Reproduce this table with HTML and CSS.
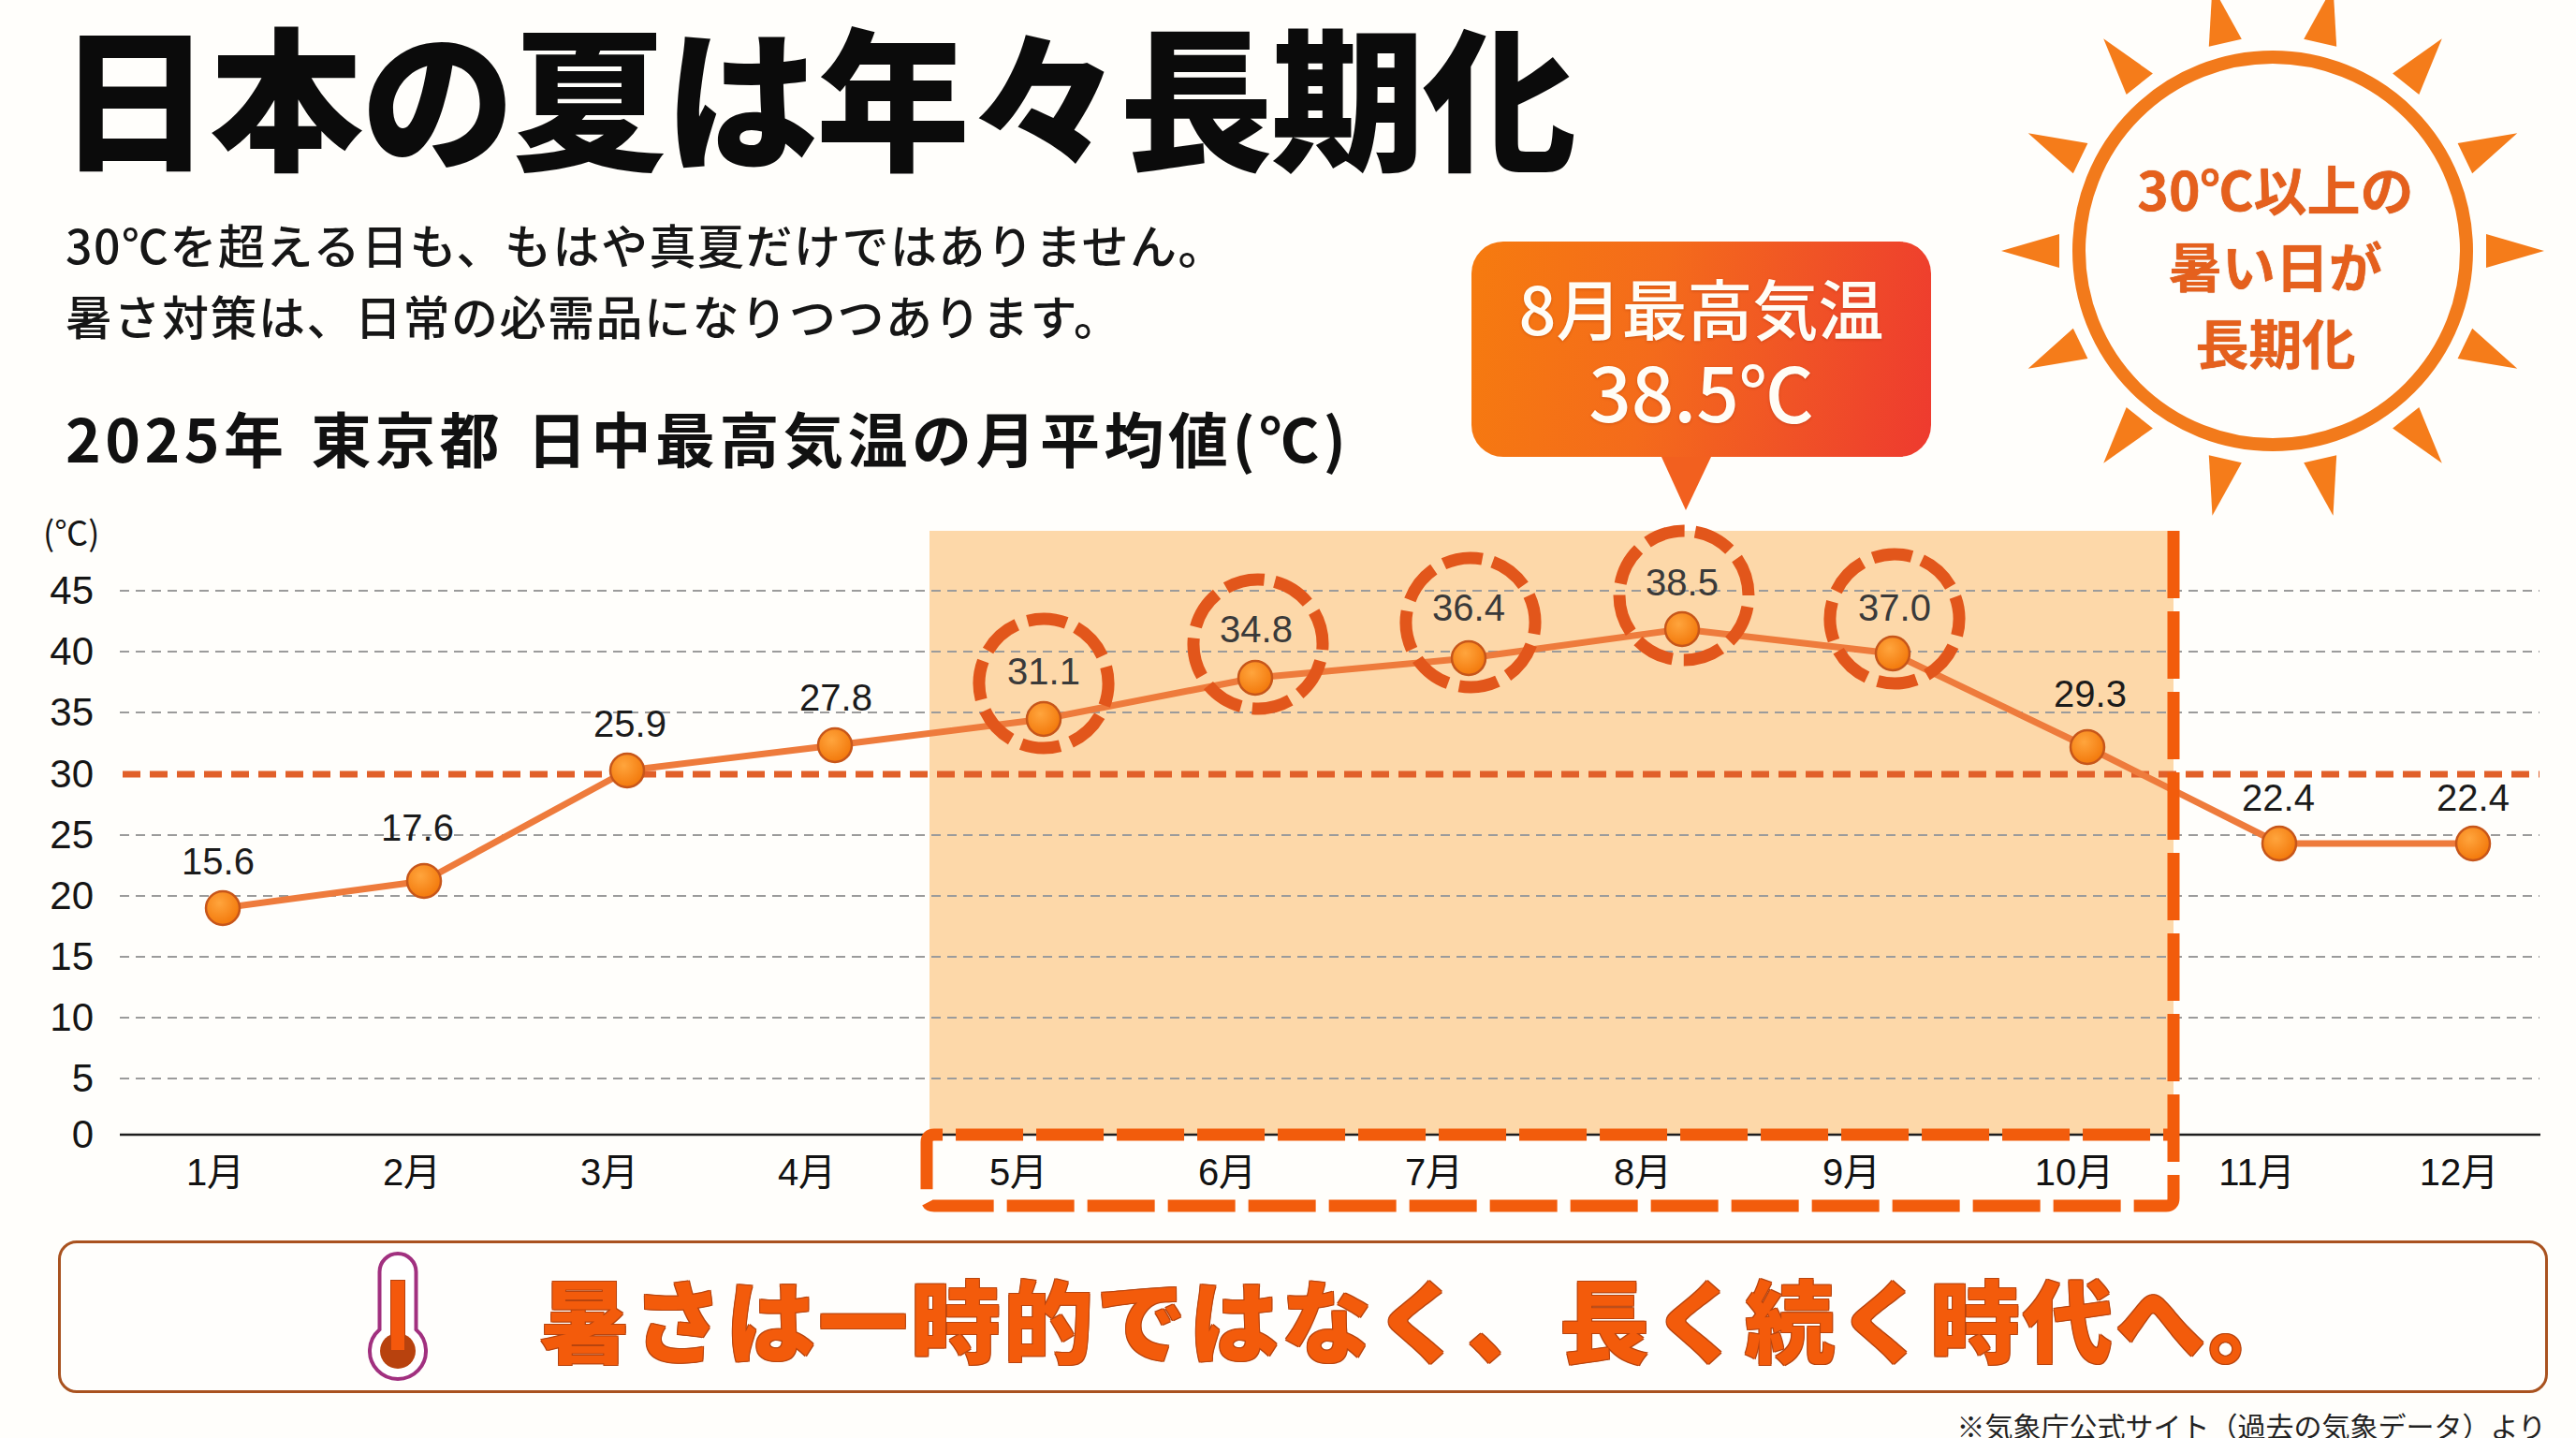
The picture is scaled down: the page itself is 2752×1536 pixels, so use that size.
FILE: index.html
```html
<!DOCTYPE html>
<html lang="ja">
<head>
<meta charset="utf-8">
<title>日本の夏は年々長期化</title>
<link rel="stylesheet" href="styles.css">
</head>
<body>
<div class="page">
  <header class="header">
    <h1 class="title">日本の夏は年々長期化</h1>
    <p class="lead">30℃を超える日も、もはや真夏だけではありません。<br>暑さ対策は、日常の必需品になりつつあります。</p>
    <h2 class="chart-title">2025年 東京都 日中最高気温の月平均値(℃)</h2>
  </header>

  <div class="sun">
    <svg class="sun-art" width="600" height="600" viewBox="0 0 600 600">
      <g class="rays">
        <polygon points="364.5,17.3 368.2,81.7 333.2,73.7"/>
        <polygon points="480.8,73.3 456.3,132.9 428.1,110.5"/>
        <polygon points="561.3,174.2 513.2,217.3 497.6,184.9"/>
        <polygon points="590,300 528,318 528,282"/>
        <polygon points="561.3,425.8 497.6,415.1 513.2,382.7"/>
        <polygon points="480.8,526.7 428.1,489.5 456.3,467.1"/>
        <polygon points="364.5,582.7 333.2,526.3 368.2,518.3"/>
        <polygon points="235.5,582.7 266.8,526.3 231.8,518.3"/>
        <polygon points="119.2,526.7 171.9,489.5 143.7,467.1"/>
        <polygon points="38.7,425.8 102.4,415.1 86.8,382.7"/>
        <polygon points="10,300 72,318 72,282"/>
        <polygon points="38.7,174.2 86.8,217.3 102.4,184.9"/>
        <polygon points="119.2,73.3 143.7,132.9 171.9,110.5"/>
        <polygon points="235.5,17.3 231.8,81.7 266.8,73.7"/>
      </g>
      <circle class="sun-ring" cx="300" cy="300" r="207"/>
    </svg>
    <div class="sun-text">30℃以上の<br>暑い日が<br>長期化</div>
  </div>

  <div class="callout">
    <div class="callout-label">8月最高気温</div>
    <div class="callout-value">38.5℃</div>
  </div>

  <section class="chart">
    <svg class="chart-svg" width="2752" height="770" viewBox="0 540 2752 770">
      <defs>
        <radialGradient id="dotg" cx="40%" cy="35%" r="70%">
          <stop offset="0" stop-color="#ffa53d"/>
          <stop offset="1" stop-color="#f27608"/>
        </radialGradient>
      </defs>
      <rect class="season" x="993" y="567" width="1329" height="645"/>
      <g class="grid">
        <line x1="128" y1="631" x2="2713" y2="631"/>
        <line x1="128" y1="696" x2="2713" y2="696"/>
        <line x1="128" y1="761" x2="2713" y2="761"/>
        <line x1="128" y1="892" x2="2713" y2="892"/>
        <line x1="128" y1="957" x2="2713" y2="957"/>
        <line x1="128" y1="1022" x2="2713" y2="1022"/>
        <line x1="128" y1="1087" x2="2713" y2="1087"/>
        <line x1="128" y1="1152" x2="2713" y2="1152"/>
      </g>
      <line class="limit" x1="131" y1="827" x2="2713" y2="827"/>
      <line class="axis" x1="128" y1="1212" x2="2714" y2="1212"/>

      <g class="ylab">
        <text x="46" y="583" class="unit">(℃)</text>
        <text x="100" y="645">45</text>
        <text x="100" y="710">40</text>
        <text x="100" y="775">35</text>
        <text x="100" y="841">30</text>
        <text x="100" y="906">25</text>
        <text x="100" y="971">20</text>
        <text x="100" y="1036">15</text>
        <text x="100" y="1101">10</text>
        <text x="100" y="1166">5</text>
        <text x="100" y="1226">0</text>
      </g>

      <polyline class="series" points="238,970 453,941 670,823 892,796 1115,768 1341,724 1569,703 1797,672 2022,698 2230,798 2435,901 2642,901"/>

      <g class="rings">
        <circle cx="1115" cy="730" r="69" transform="rotate(-60 1115 730)"/>
        <circle cx="1344" cy="688" r="69" transform="rotate(-75 1344 688)"/>
        <circle cx="1571" cy="665" r="69" transform="rotate(-70 1571 665)"/>
        <circle cx="1799" cy="636" r="69" transform="rotate(-80 1799 636)"/>
        <circle cx="2024" cy="661" r="69" transform="rotate(-65 2024 661)"/>
      </g>

      <g class="dots">
        <circle cx="238" cy="970" r="18"/>
        <circle cx="453" cy="941" r="18"/>
        <circle cx="670" cy="823" r="18"/>
        <circle cx="892" cy="796" r="18"/>
        <circle cx="1115" cy="768" r="18"/>
        <circle cx="1341" cy="724" r="18"/>
        <circle cx="1569" cy="703" r="18"/>
        <circle cx="1797" cy="672" r="18"/>
        <circle cx="2022" cy="698" r="18"/>
        <circle cx="2230" cy="798" r="18"/>
        <circle cx="2435" cy="901" r="18"/>
        <circle cx="2642" cy="901" r="18"/>
      </g>

      <g class="vals">
        <text x="233" y="934">15.6</text>
        <text x="446" y="898">17.6</text>
        <text x="673" y="787">25.9</text>
        <text x="893" y="759">27.8</text>
        <text x="1115" y="731" class="hot">31.1</text>
        <text x="1342" y="686" class="hot">34.8</text>
        <text x="1569" y="663" class="hot">36.4</text>
        <text x="1797" y="636" class="hot">38.5</text>
        <text x="2024" y="663" class="hot">37.0</text>
        <text x="2233" y="755">29.3</text>
        <text x="2434" y="866">22.4</text>
        <text x="2642" y="866">22.4</text>
      </g>

      <g class="xlab">
        <text x="230" y="1266">1月</text>
        <text x="440" y="1266">2月</text>
        <text x="651" y="1266">3月</text>
        <text x="862" y="1266">4月</text>
        <text x="1088" y="1266">5月</text>
        <text x="1311" y="1266">6月</text>
        <text x="1532" y="1266">7月</text>
        <text x="1755" y="1266">8月</text>
        <text x="1978" y="1266">9月</text>
        <text x="2216" y="1266">10月</text>
        <text x="2411" y="1266">11月</text>
        <text x="2627" y="1266">12月</text>
      </g>

      <path class="frame" d="M2322,567 V1280 Q2322,1288 2314,1288 H998 Q990,1288 990,1280 V1220 Q990,1212 998,1212 H2322"/>
    </svg>
  </section>

  <div class="banner">
    <svg class="thermo" width="64" height="139" viewBox="0 0 64 139">
      <path class="thermo-glass" d="M12.5,83.2 L12.5,21.5 A19.5,19.5 0 0 1 51.5,21.5 L51.5,83.2 A30,30 0 1 1 12.5,83.2 Z"/>
      <rect class="thermo-fill" x="24" y="30" width="16" height="72"/>
      <circle class="thermo-fill" cx="32" cy="106" r="19"/>
      <rect class="thermo-core" x="25" y="31" width="14" height="74"/>
    </svg>
    <p class="banner-text">暑さは一時的ではなく、長く続く時代へ。</p>
  </div>

  <p class="source">※気象庁公式サイト（過去の気象データ）より</p>
</div>
</body>
</html>
```
FILE: styles.css
```css
html, body {
  margin: 0;
  padding: 0;
}

body {
  background: #fffefb;
  font-family: "Noto Sans CJK JP", "Noto Sans", sans-serif;
  color: #141414;
}

.page {
  position: relative;
  width: 2752px;
  height: 1536px;
  overflow: hidden;
}

.header {
  height: 540px;
  box-sizing: border-box;
  padding: 16px 0 0 62px;
}

.title {
  margin: 0;
  width: fit-content;
  font-size: 164px;
  line-height: 176px;
  font-weight: 900;
  letter-spacing: -2px;
  color: #0b0b0b;
  margin-top: -6px;
}

.lead {
  width: fit-content;
  margin: 36px 0 0 8px;
  font-size: 50px;
  line-height: 76px;
  font-weight: 500;
  letter-spacing: 1.5px;
  color: #161616;
}

.chart-title {
  width: fit-content;
  margin: 52px 0 0 8px;
  font-size: 64px;
  line-height: 80px;
  font-weight: 700;
  letter-spacing: 4.5px;
  word-spacing: 6px;
  color: #111;
}

/* sun badge */
.sun {
  position: absolute;
  left: 2128px;
  top: -32px;
  width: 600px;
  height: 600px;
}

.sun-art {
  position: absolute;
  left: 0;
  top: 0;
  overflow: visible;
}

.rays polygon {
  fill: #f57c1a;
}

.sun-ring {
  fill: #fffefb;
  stroke: #f27a1b;
  stroke-width: 14;
}

.sun-text {
  position: absolute;
  left: 6px;
  right: 0;
  top: 191px;
  text-align: center;
  font-size: 57px;
  line-height: 82px;
  font-weight: 700;
  color: #e5601d;
  text-shadow: 0 0 1px #b8470f;
}

/* callout */
.callout {
  position: absolute;
  left: 1572px;
  top: 258px;
  width: 491px;
  height: 230px;
  border-radius: 34px;
  background: linear-gradient(100deg, #f67b0f 0%, #f46b1b 40%, #f05326 70%, #ee3a2f 100%);
  display: flex;
  flex-direction: column;
  align-items: center;
  justify-content: center;
  color: #fffdf6;
  text-shadow: 0 1px 3px rgba(140, 40, 0, 0.35);
}

.callout::after {
  content: "";
  position: absolute;
  left: 203px;
  top: 100%;
  border-left: 26px solid transparent;
  border-right: 27px solid transparent;
  border-top: 57px solid #f2601f;
}

.callout-label {
  font-size: 70px;
  line-height: 86px;
  font-weight: 500;
}

.callout-value {
  font-size: 80px;
  line-height: 90px;
  font-weight: 500;
}

/* chart */
.chart {
  height: 770px;
}

.chart-svg {
  display: block;
}

.season {
  fill: #fdd8a9;
}

.grid line {
  stroke: #9b9b9b;
  stroke-width: 2;
  stroke-dasharray: 10 7;
}

.limit {
  stroke: #e1602a;
  stroke-width: 7;
  stroke-dasharray: 19 10;
}

.axis {
  stroke: #1e1e1e;
  stroke-width: 2.5;
}

.ylab text {
  font-family: "Liberation Sans", "Noto Sans CJK JP", sans-serif;
  font-size: 42px;
  fill: #151515;
  text-anchor: end;
}

.ylab .unit {
  font-family: "Noto Sans CJK JP", sans-serif;
  font-size: 36px;
  text-anchor: start;
}

.series {
  fill: none;
  stroke: #ee7b3c;
  stroke-width: 7;
  stroke-linejoin: round;
}

.rings circle {
  fill: none;
  stroke: #e2561b;
  stroke-width: 13;
  stroke-dasharray: 42 12.2;
}

.dots circle {
  fill: url(#dotg);
  stroke: #c7561a;
  stroke-width: 2.5;
}

.vals text {
  font-family: "Liberation Sans", sans-serif;
  font-size: 40px;
  fill: #1b1b1b;
  text-anchor: middle;
}

.vals .hot {
  fill: #3a3a3a;
}

.xlab text {
  font-family: "Liberation Sans", "Noto Sans CJK JP", sans-serif;
  font-size: 40px;
  fill: #121212;
  text-anchor: middle;
}

.frame {
  fill: none;
  stroke: #f25c0c;
  stroke-width: 13;
  stroke-dasharray: 72 14;
}

/* banner */
.banner {
  margin: 15px 30px 0 62px;
  height: 163px;
  box-sizing: border-box;
  border: 3px solid #a9521f;
  border-radius: 20px;
  background: #fffefc;
  display: flex;
  align-items: center;
  padding-left: 328px;
  gap: 120px;
}

.thermo {
  flex: none;
  display: block;
}

.thermo-glass {
  fill: #ffffff;
  stroke: #a1307f;
  stroke-width: 4;
}

.thermo-fill {
  fill: #b8420e;
}

.thermo-core {
  fill: #f4580c;
}

.banner-text {
  margin: 0;
  font-size: 96px;
  line-height: 120px;
  font-weight: 900;
  letter-spacing: 3px;
  color: #f35b0b;
  text-shadow: 1px 1px 0 #b8440e, -1px -1px 0 #b8440e, 1px -1px 0 #b8440e, -1px 1px 0 #b8440e;
}

.source {
  margin: 18px 32px 0 auto;
  width: fit-content;
  font-size: 30px;
  line-height: 32px;
  color: #222;
}
```
